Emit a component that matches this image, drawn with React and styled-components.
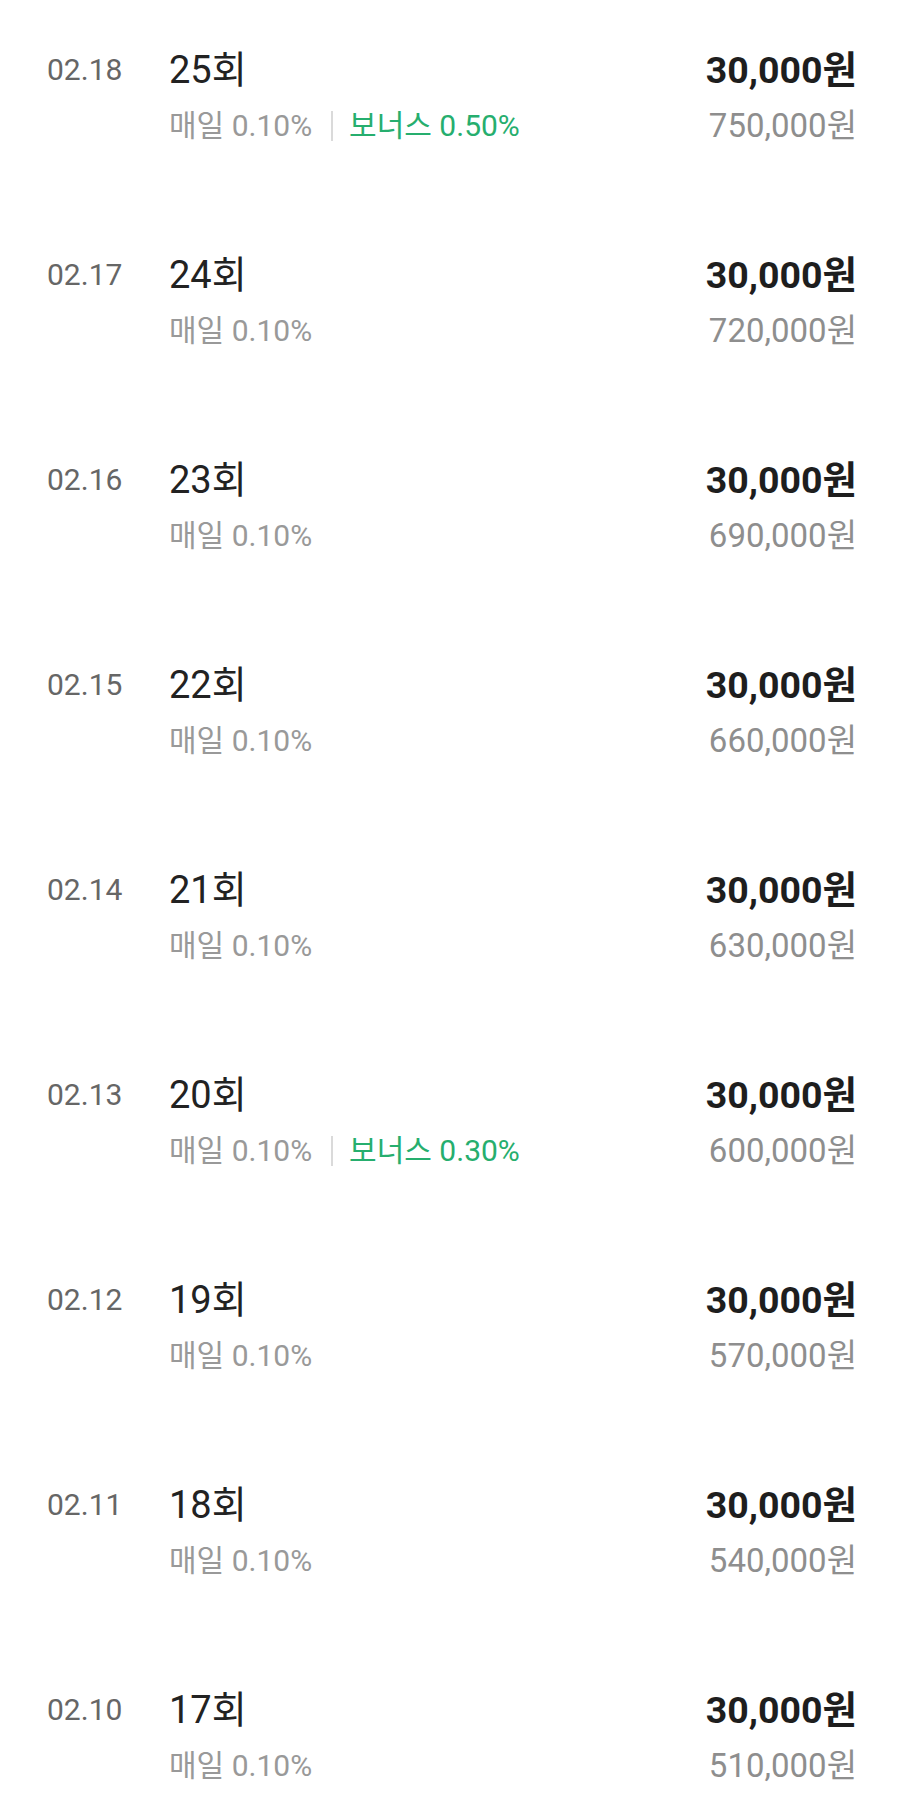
import React from "react";
import styled, { createGlobalStyle } from "styled-components";

const GlobalStyle = createGlobalStyle`
  html, body {
    margin: 0;
    padding: 0;
    background: #ffffff;
  }
  body {
    font-family: "Roboto", "Noto Sans CJK KR", sans-serif;
    -webkit-font-smoothing: antialiased;
  }
`;

const List = styled.ul`
  list-style: none;
  margin: 0;
  padding: 0;
  width: 904px;
`;

const Row = styled.li`
  display: grid;
  grid-template-columns: 122px 1fr auto;
  grid-template-rows: 48px 40px;
  row-gap: 12px;
  height: 205px;
  box-sizing: border-box;
  padding: 46px 47px 0 47px;
`;

const DateText = styled.span`
  grid-column: 1;
  grid-row: 1;
  font-size: 30px;
  line-height: 48px;
  color: #666666;
`;

const Title = styled.span`
  grid-column: 2;
  grid-row: 1;
  font-size: 38px;
  line-height: 48px;
  color: #222222;
`;

const Amount = styled.span`
  grid-column: 3;
  grid-row: 1;
  justify-self: end;
  font-size: 37.5px;
  line-height: 48px;
  font-weight: 700;
  color: #1e1e1e;
`;

const Meta = styled.div`
  grid-column: 2;
  grid-row: 2;
  display: flex;
  align-items: center;
  font-size: 30px;
  line-height: 40px;
  color: #999999;
`;

const Divider = styled.span`
  width: 2px;
  height: 30px;
  margin: 0 16px 0 19px;
  background: #dadada;
`;

const Bonus = styled.span`
  color: #26ae6e;
`;

const Total = styled.span`
  grid-column: 3;
  grid-row: 2;
  justify-self: end;
  font-size: 33px;
  line-height: 40px;
  color: #8e8e8e;
`;

const rows = [
  { date: "02.18", n: 25, total: "750,000", bonus: "0.50%" },
  { date: "02.17", n: 24, total: "720,000" },
  { date: "02.16", n: 23, total: "690,000" },
  { date: "02.15", n: 22, total: "660,000" },
  { date: "02.14", n: 21, total: "630,000" },
  { date: "02.13", n: 20, total: "600,000", bonus: "0.30%" },
  { date: "02.12", n: 19, total: "570,000" },
  { date: "02.11", n: 18, total: "540,000" },
  { date: "02.10", n: 17, total: "510,000" },
];

export default function App() {
  return (
    <>
      <GlobalStyle />
      <List>
        {rows.map((r) => (
          <Row key={r.n}>
            <DateText>{r.date}</DateText>
            <Title>{r.n}회</Title>
            <Amount>30,000원</Amount>
            <Meta>
              <span>매일 0.10%</span>
              {r.bonus && (
                <>
                  <Divider />
                  <Bonus>보너스 {r.bonus}</Bonus>
                </>
              )}
            </Meta>
            <Total>{r.total}원</Total>
          </Row>
        ))}
      </List>
    </>
  );
}
